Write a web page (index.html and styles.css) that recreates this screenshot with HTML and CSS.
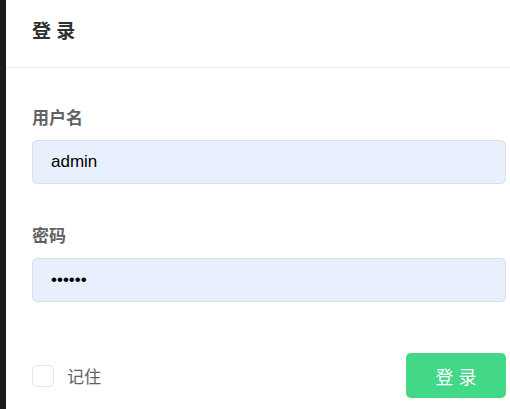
FILE: index.html
```html
<!DOCTYPE html>
<html lang="zh">
<head>
  <meta charset="UTF-8" />
  <meta name="viewport" content="width=device-width, initial-scale=1.0" />
  <title>登录</title>
  <link rel="stylesheet" href="styles.css">
</head>
<body>
<div class="side"></div>
<div class="dialog">
  <div class="dialog-header">
    <h2>登 录</h2>
  </div>
  <form class="login-form">
    <div class="field">
      <label for="user">用户名</label>
      <input type="text" id="user" value="admin">
    </div>
    <div class="field">
      <label for="pass">密码</label>
      <input type="password" id="pass" value="123456">
    </div>
    <div class="footer">
      <label class="remember"><span class="box"></span>记住</label>
      <button type="button" class="btn-login">登 录</button>
    </div>
  </form>
</div>
</body>
</html>
```

FILE: styles.css
```css
* { margin: 0; padding: 0; box-sizing: border-box; }
body {
  font-family: "Liberation Sans", "Noto Sans CJK SC", sans-serif;
  display: flex;
  min-height: 100vh;
  background: #fff;
  overflow: hidden;
}
.side {
  width: 6px;
  background: #1b1b1b;
  flex-shrink: 0;
}
.dialog {
  flex: 1;
  background: #fff;
}
.dialog-header {
  height: 68px;
  border-bottom: 1px solid #ebeef5;
  padding: 20px 0 0 26px;
}
h2 {
  font-size: 19px;
  font-weight: 700;
  color: #303133;
  line-height: 24px;
}
.login-form {
  padding: 40px 4px 0 26px;
}
.field { margin-bottom: 42px; }
.field label {
  display: block;
  font-size: 17px;
  font-weight: 700;
  color: #606266;
  line-height: 22px;
  margin-bottom: 10px;
}
.field input {
  width: 100%;
  height: 44px;
  border: 1px solid #dcdfe6;
  border-radius: 5px;
  background: #e8f0fe;
  padding: 0 18px;
  font-size: 17px;
  font-family: "Liberation Sans", sans-serif;
  color: #000;
  outline: none;
}
.footer {
  display: flex;
  align-items: center;
  justify-content: space-between;
  padding-top: 9px;
}
.remember {
  display: flex;
  align-items: center;
  gap: 13px;
  font-size: 17px;
  color: #606266;
}
.box {
  width: 22px;
  height: 22px;
  border: 1px solid #e4e7ed;
  border-radius: 5px;
}
.btn-login {
  width: 100px;
  height: 45px;
  border: none;
  border-radius: 5px;
  background: #42d888;
  color: #fff;
  font-size: 18px;
  font-family: "Liberation Sans", "Noto Sans CJK SC", sans-serif;
  cursor: pointer;
}
```
